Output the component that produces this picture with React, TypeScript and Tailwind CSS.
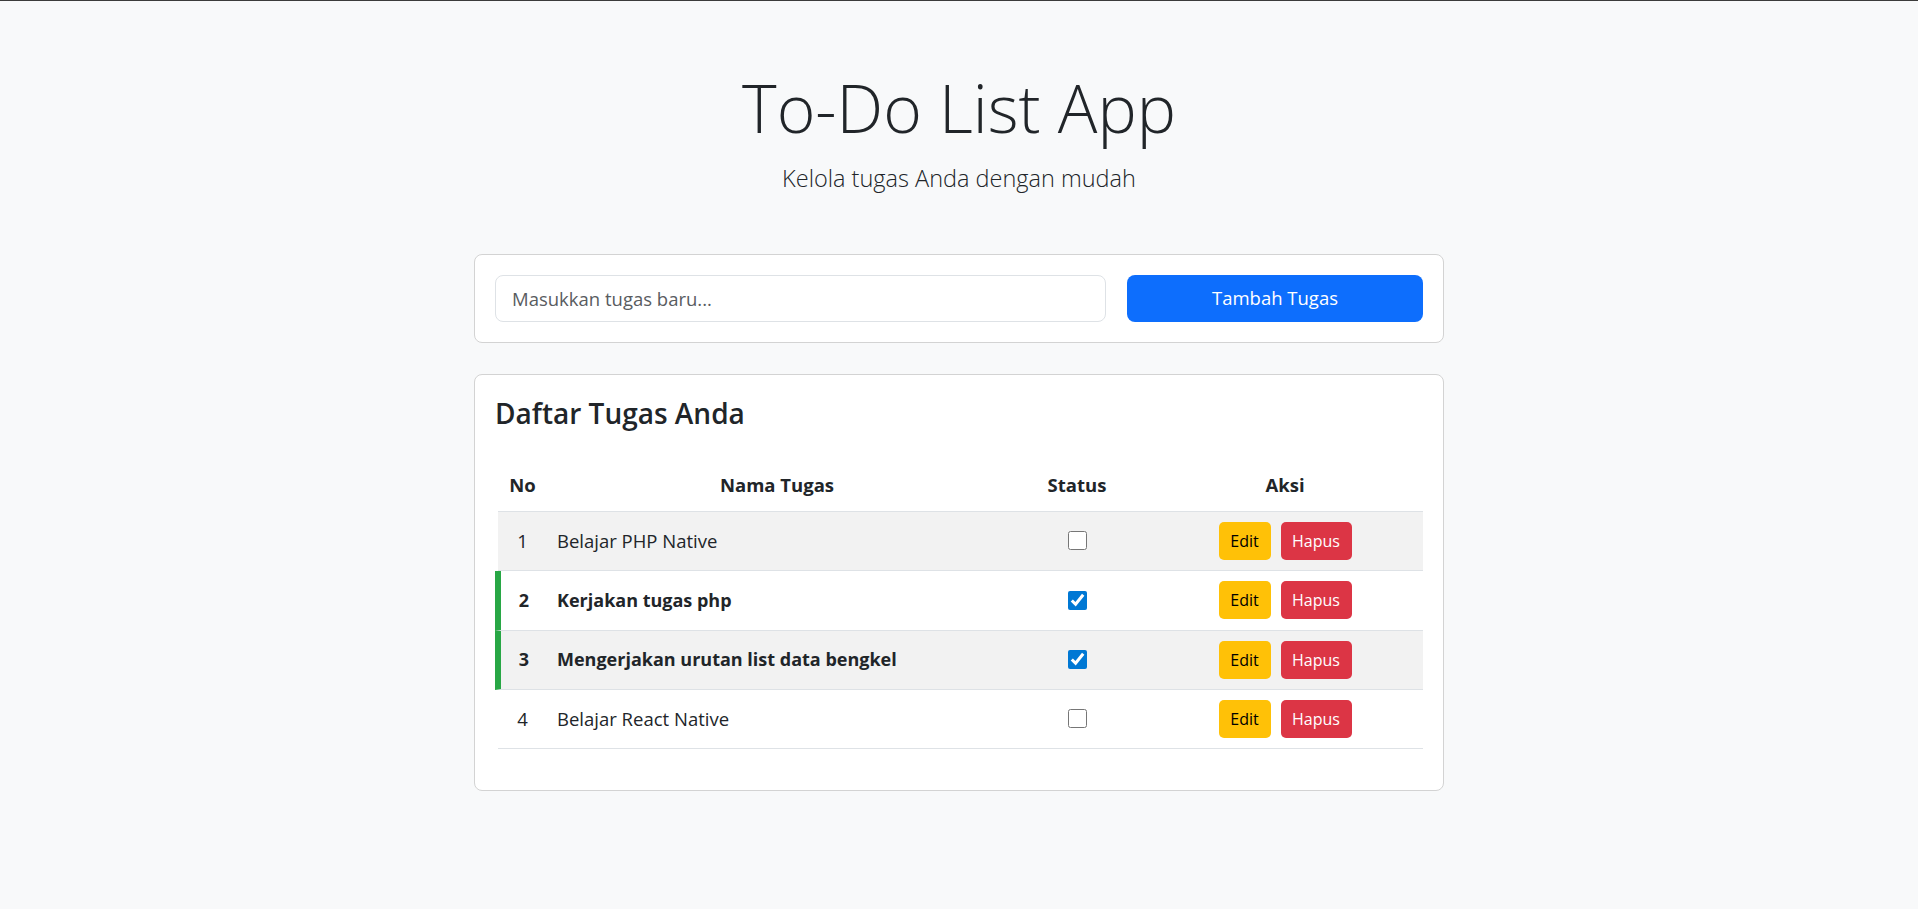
import { useState } from 'react';

type Task = { id: number; name: string; done: boolean };

const initialTasks: Task[] = [
  { id: 1, name: 'Belajar PHP Native', done: false },
  { id: 2, name: 'Kerjakan tugas php', done: true },
  { id: 3, name: 'Mengerjakan urutan list data bengkel', done: true },
  { id: 4, name: 'Belajar React Native', done: false },
];

export default function App() {
  const [tasks, setTasks] = useState<Task[]>(initialTasks);
  const [text, setText] = useState('');

  const toggle = (id: number) =>
    setTasks((prev) => prev.map((t) => (t.id === id ? { ...t, done: !t.done } : t)));

  return (
    <div className="min-h-screen bg-[#f8f9fa] border-t border-[#3b3b3b] font-['Open_Sans',sans-serif] text-[#212529]">
      <div className="w-[970px] mx-auto pt-[73px] pb-10">
        <div className="text-center">
          <h1 className="text-[66px] font-light leading-none">To-Do List App</h1>
          <p className="mt-[27px] text-[23.5px] font-light leading-none">Kelola tugas Anda dengan mudah</p>
        </div>

        <div className="mt-[63px] bg-white border border-[#d3d3d3] rounded-[8px] p-[20px] flex gap-[21px]">
          <input
            value={text}
            onChange={(e) => setText(e.target.value)}
            placeholder="Masukkan tugas baru..."
            className="w-[611px] h-[47px] px-4 border border-[#dee2e6] rounded-[8px] text-[18.5px] placeholder:text-[#595c5f] outline-none"
          />
          <button className="flex-1 h-[47px] rounded-[8px] bg-[#0d6efd] text-white text-[18.5px]">
            Tambah Tugas
          </button>
        </div>

        <div className="mt-[31px] bg-white border border-[#d3d3d3] rounded-[8px] px-[20px] pt-[24px] pb-[41px]">
          <h3 className="text-[28px] font-semibold leading-none">Daftar Tugas Anda</h3>

          <div className="mt-[34px]">
            <div className="ml-[3px] grid grid-cols-[49px_460px_140px_1fr] h-[51px] items-center border-b border-[#dee2e6] text-[18.5px] font-bold text-center pb-px">
              <div>No</div>
              <div>Nama Tugas</div>
              <div>Status</div>
              <div>Aksi</div>
            </div>

            {tasks.map((task, i) => (
              <div
                key={task.id}
                className={`grid items-center border-b border-[#dee2e6] ${
                  i === 1 ? 'h-[60px]' : 'h-[59px]'
                } ${i % 2 === 0 ? 'bg-[#f2f2f2]' : 'bg-white'} ${
                  task.done
                    ? 'border-l-[6px] border-l-[#28a745] grid-cols-[46px_460px_140px_1fr] font-bold text-[18px]'
                    : 'ml-[3px] grid-cols-[49px_460px_140px_1fr] text-[18.5px]'
                }`}
              >
                <div className="text-center">{task.id}</div>
                <div className="pl-[10px]">{task.name}</div>
                <div className="flex justify-center">
                  <input
                    type="checkbox"
                    checked={task.done}
                    onChange={() => toggle(task.id)}
                    className="w-[19px] h-[19px] accent-[#0078d4]"
                  />
                </div>
                <div className="flex justify-center gap-[10px] font-normal">
                  <button className="w-[52px] h-[38px] rounded-[5px] bg-[#ffc107] text-black text-[16px]">Edit</button>
                  <button className="w-[71px] h-[38px] rounded-[5px] bg-[#dc3545] text-white text-[16px]">Hapus</button>
                </div>
              </div>
            ))}
          </div>
        </div>
      </div>
    </div>
  );
}
